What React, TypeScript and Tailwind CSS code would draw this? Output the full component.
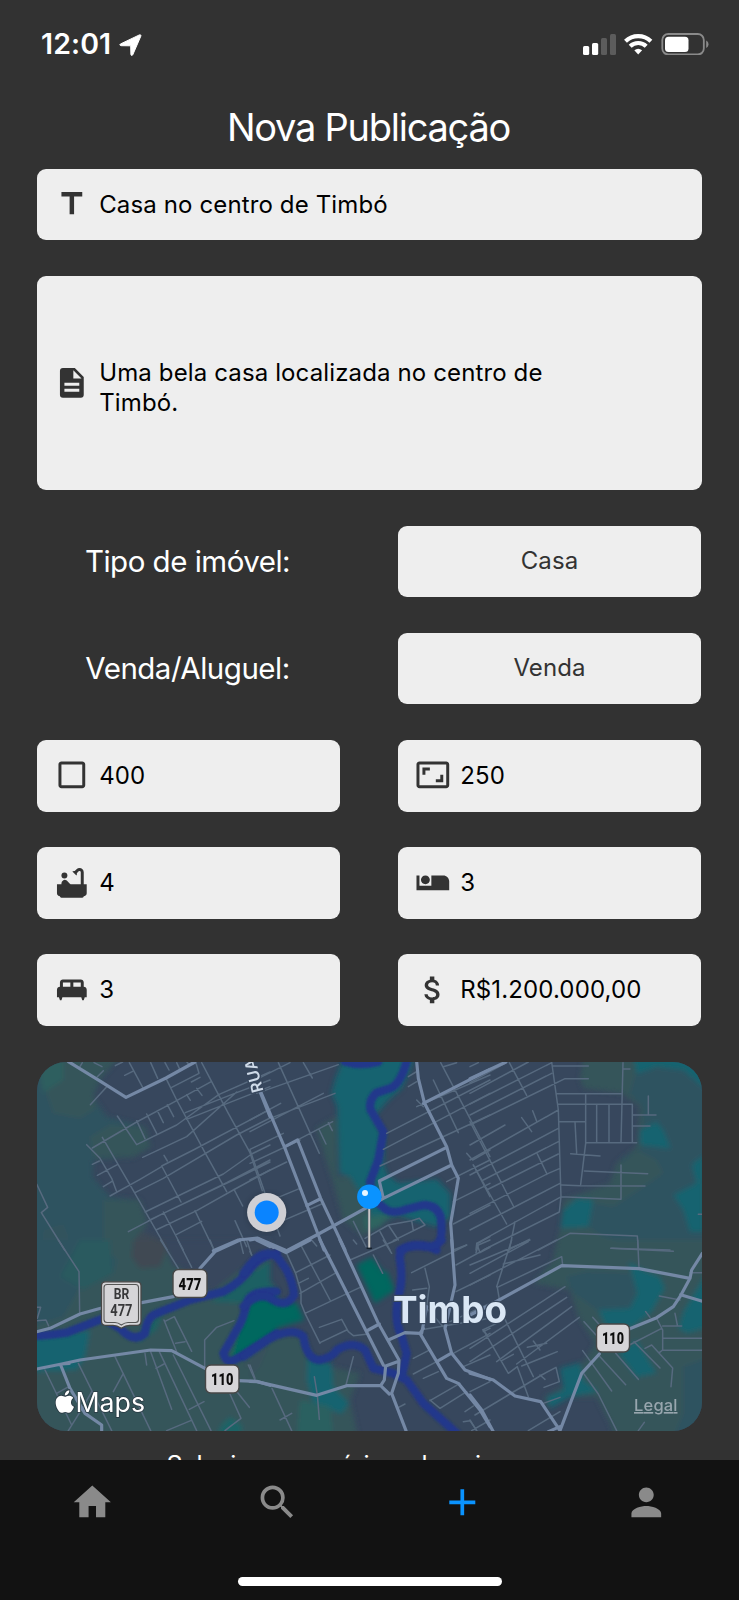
import type { ReactNode } from "react";
import type { IconType } from "react-icons";
import {
  MdAdd,
  MdAirlineSeatIndividualSuite,
  MdAspectRatio,
  MdAttachMoney,
  MdBathtub,
  MdCheckBoxOutlineBlank,
  MdHome,
  MdKingBed,
  MdPerson,
  MdSearch,
  MdTitle,
} from "react-icons/md";

const DocumentIcon = ({ className }: { className?: string }) => (
  <svg viewBox="0 0 24 24" className={className} fill="currentColor" fillRule="evenodd">
    <path d="M14 2H6a2 2 0 0 0-2 2v16a2 2 0 0 0 2 2h12a2 2 0 0 0 2-2V8zM13 3.500 18.500 9H13zM7 12h10v2H7zM7 16h10v2H7z" />
  </svg>
);

function StatusBar() {
  return (
    <div className="flex h-[88px] shrink-0 items-center justify-between pl-[41px] pr-[30px]">
      <div className="flex items-center gap-[8px] pt-[1px]">
        <span className="text-[28.500px] font-semibold leading-none tracking-[0.1px]">12:01</span>
        <svg width="23" height="22" viewBox="0 0 23 22" fill="#fff" stroke="#fff" strokeWidth="1" strokeLinejoin="round">
          <path d="M1.400 10 20.400.9c1-.4 1.800.2 1.400 1.300L13.800 20.700c-.5 1.100-1.900.9-1.900-.3l-.2-8.600-9.600-.1c-1.300-.1-1.600-1.200-.7-1.700z" />
        </svg>
      </div>
      <svg width="127" height="22" viewBox="0 0 127 22">
        <rect x="1" y="13" width="6.200" height="9" rx="1.500" fill="#fff" />
        <rect x="10" y="10" width="6.200" height="12" rx="1.500" fill="#fff" />
        <rect x="19" y="5" width="6" height="17" rx="1.500" fill="#5c5c5c" />
        <rect x="28" y="1" width="6" height="21" rx="1.500" fill="#5c5c5c" />
        <g fill="none" stroke="#fff" strokeWidth="4.200">
          <path d="M43.500 8.200a18.500 18.500 0 0 1 25.400 0" />
          <path d="M48.200 13.200a11.600 11.600 0 0 1 16 0" />
        </g>
        <path d="M52.300 17.300a6 6 0 0 1 7.800 0l-3.900 4.200z" fill="#fff" />
        <rect x="80.300" y="1" width="41.500" height="20.500" rx="6" fill="none" stroke="#8a8a8a" strokeWidth="1.800" />
        <rect x="83" y="3.700" width="23.500" height="15.200" rx="3.500" fill="#fff" />
        <path d="M124.200 7.500c3 1.500 3 6 0 7.500z" fill="#8a8a8a" />
      </svg>
    </div>
  );
}

type AnyIcon = IconType | typeof DocumentIcon;

function Field({ icon: Icon, children, tall }: { icon: AnyIcon; children: ReactNode; tall?: boolean }) {
  return (
    <div
      className={
        "flex items-center gap-[9.500px] rounded-[9px] bg-[#eee] pl-[17px] text-[24px] leading-[30px] text-black " +
        (tall ? "h-[214.200px]" : "h-[71.400px]")
      }
    >
      <Icon className="mb-[1px] size-[35.700px] shrink-0 text-[#333]" />
      <span className={tall ? "w-[470px] pt-[9px] tracking-[0.130px]" : "pt-[1px] tracking-[0.130px]"}>{children}</span>
    </div>
  );
}

function SelectRow({ label, value }: { label: string; value: string }) {
  return (
    <div className="grid grid-cols-[303px_303px] items-center justify-between">
      <span className="pb-[1px] pr-[2px] text-center text-[29.500px] tracking-[-0.5px]">{label}</span>
      <div className="flex h-[71.400px] items-center justify-center rounded-[9px] bg-[#eee] pb-[1px] text-[24px] tracking-[0.100px] text-[#333]">
        {value}
      </div>
    </div>
  );
}

/* Map geometry: every tile covers 240x200 px and is drawn at a third of its own units. */
type Shape = [fill: string, d: string];
interface Tile {
  x: number;
  y: number;
  land: Shape[];
  river: string;
  minor: string;
  major: string;
}

const GREEN = "#35555a";
const SEA = "#2d5260";
const TEAL = "#12646f";
const FOREST = "#03685f";
const CITY = "#37475d";

const tiles: Tile[] = [
  {
    x: 30,
    y: 1050,
    land: [
      [SEA, "M0 0H280L210 90 190 140 230 200 345 230 362 290 310 322 190 330 188 380 240 440 330 450 350 520 310 560V620H0Z"],
      [GREEN, "M60 0H290L215 80 190 130 200 175 150 205 70 190 50 130Z"],
      ["#2d5f5f", "M20 30H100V90L40 130Z"],
      [GREEN, "M180 260 240 225 345 230 362 290 310 322 190 325Z"],
      [GREEN, "M220 450 330 450 352 520 310 600H220Z"],
      ["#31535d", "M40 540 100 520 120 570 90 610H30Z"],
      ["#3e4956", "M330 545 380 560 400 620H290Z"],
    ],
    river: "",
    minor:
      "M150 50 157 38M192 38 216 50M181 164 229 112M202 80 220 62M256 47 278 36M284 76 308 64M298 38 338 112M362 38 383 85M405 38 417 60M440 38 448 55M470 35 478 45M425 112 507 70 498 40M484 96 510 82M515 38 595 190 660 308 697 422M408 85 440 150 525 308 590 425M187 294 320 216 440 152 545 94M262 198 320 284 440 225 566 134 720 66M320 212 345 266M350 192 380 250M382 182 400 218M412 164 431 200M470 134 481 151M500 115 516 136M338 322 470 260 620 126M466 188 620 128 720 90M470 208 720 110M395 348 490 300 720 178M315 428 400 385 620 255 720 204M240 438 330 388 395 350M170 284 210 325 245 385 260 425M217 262 310 422 412 600M187 343 208 333M202 376 262 344M220 410 246 394M402 316 412 333M395 348 453 456M345 486 580 372 665 312 720 285M355 512 590 398 720 330M295 545 400 490 610 390 720 336M400 486 460 600M495 482 552 600M378 540 500 482 610 420 720 360M440 553 515 514M612 418 638 468M615 512 650 590M20 402 53 472 34 488 104 600",
    major: "M115 35 208 92 288 142 408 84 495 36M690 125 720 200M550 602 625 570 682 564 730 592",
  },
  {
    x: 250,
    y: 1050,
    land: [
      [GREEN, "M200 235 260 200V380L300 380 380 520 340 560 280 510 250 400 225 320Z"],
      [TEAL, "M290 0H500L480 60 455 115 415 150 372 200 402 260 400 340 412 375 445 400 560 388 600 430 600 500 560 530 440 495 370 530 355 470 300 380 268 370 262 170 245 130 255 90Z"],
      ["#2d6560", "M340 500 430 490 390 530 350 545Z"],
    ],
    river:
      "M285 35Q330 50 385 35M470 35Q450 105 420 115L380 128Q355 150 362 180L400 245 385 330 360 395 372 450 410 480Q430 492 470 478L520 465Q560 465 572 500 580 560 565 580M450 600Q500 570 560 600",
    minor:
      "M0 98 120 38M20 130 265 44M0 210 92 160M60 205 255 130M0 245 220 130M0 298 100 250M0 340 150 270M100 292 248 215M0 390 110 336M85 38 208 310M160 38 187 84M208 240 228 282M235 218 247 242M0 300 45 430M90 440 150 415M80 520 215 462M90 558 80 530M310 514 348 590M390 545 420 600M345 565 415 525 485 512 508 505 525 525 430 572M415 525 445 570M485 512 490 542M500 170 720 75M475 110 500 95M475 80 498 66M500 150 520 170M550 90 625 248M572 38 720 320M580 50 620 38M410 250 720 90M400 298 720 130M390 348 720 195M590 395 720 330M650 310 668 330 720 300M670 345 720 440M610 455 720 400M610 522 720 465M678 600 680 582 720 560M610 600 650 585",
    major:
      "M30 120 105 295 205 555 222 600M105 290 143 270 212 445 285 600M170 467 210 447M110 602 200 555 310 495 400 445 605 345M400 445 388 393 590 292M500 35 505 85 523 158 590 290 605 345 625 385 602 520 608 600M520 160 720 58M0 570 25 565 105 600",
  },
  {
    x: 470,
    y: 1050,
    land: [
      [GREEN, "M345 0H720V620H250L270 540 280 450 420 400 440 340 500 290 510 170 455 130 340 115 330 85Z"],
      [SEA, "M500 60 720 40V600H560L400 560 355 530 370 460 430 470 520 410 580 370 560 330 500 300 450 340 460 320 520 290 520 170 480 130Z"],
      [TEAL, "M490 20H720V130L640 60 560 50 500 72Z"],
      [TEAL, "M510 240 560 215 580 240 602 296 510 285Z"],
      [TEAL, "M665 345 700 315V545L660 545 640 480 610 435 680 400Z"],
      [TEAL, "M280 480 320 445 370 450 355 530 272 535Z"],
    ],
    river: "",
    minor:
      "M0 50 25 38M0 130 175 36M0 98 105 40M0 162 245 38M0 195 245 70M0 225 285 86 355 86M0 330 265 180M0 285 105 225M0 375 265 235M40 390 265 275M50 420 265 312M0 490 235 370 270 355M0 540 270 400M20 580 270 442M40 600 268 486M0 215 130 468M10 345 110 522M118 38 170 136M155 203 185 245M188 182 200 214M202 312 230 370M118 600 135 515M115 600 178 568M245 36 265 180 273 440 268 486M248 48 355 48M262 131 453 131M265 163 487 163V276M459 38 453 276M460 57H480M347 131V280L332 403M350 278H500M270 215H347M380 165V276M417 165V276M487 195H558M535 138V195M487 228H540M315 215 320 310M302 311 390 318M343 363 533 371M453 345V448L273 440M275 405 332 407 525 408M205 600 300 550 502 558 505 600M425 595 600 600M685 493H697",
    major: "M0 86 108 36",
  },
  {
    x: 30,
    y: 1240,
    land: [
      [GREEN, "M0 0H400L430 70 490 110 540 160 720 20V640H0Z"],
      [SEA, "M0 0H200L260 60 250 100 150 140 100 230 0 260Z"],
      ["#2c5a5e", "M150 0H240L250 100 160 150 90 110Z"],
      ["#3f4852", "M310 0H420L390 80 330 85 305 50Z"],
      [CITY, "M400 0H720V30L640 80 540 160 500 80H430Z"],
      [TEAL, "M0 290 180 270 165 350 140 390 0 395Z"],
      ["#1b6163", "M340 265 400 210 380 270 320 310Z"],
      ["#1b6163", "M570 165 720 60V155L650 190 540 185Z"],
      [FOREST, "M600 360 625 260 660 180 740 150V280L640 350Z"],
      ["#404a58", "M640 380 740 320V370Z"],
      ["#1e6366", "M570 560 600 530 640 560 620 600H560Z"],
    ],
    river:
      "M10 288Q70 285 110 278L220 235 270 265Q310 310 345 280 350 230 380 220L480 180 580 155Q630 130 670 75 700 45 740 40M740 155Q660 150 650 190 640 240 620 270L580 340Q590 380 630 350L740 280",
    minor:
      "M85 0 147 95 149 218M20 202 32 202 22 235M20 242 48 240 56 258M45 390 125 555M80 460 112 442M145 370 245 572M185 455 160 500 115 572M255 350 362 572M280 400 250 455M345 340 350 375M362 335 425 508M388 335 500 572M430 345 543 572M378 385 402 372M402 240 440 335M405 244 433 230 485 334M437 310 465 305M524 380V300L560 262 612 242M478 508 522 485M410 572 482 542M600 462 633 535 600 560 585 572M610 442 658 502M655 375 675 420M392 0 445 85M443 0 485 82M540 0 550 25M630 0 640 40M650 0 665 45",
    major:
      "M20 275 60 265 150 222 212 205M335 188 430 170M510 85 555 35 630 0M680 0 720 20M20 387 95 372 150 360 362 330 425 332 525 385M625 422 680 424 720 436M92 375 120 445 165 520 215 555V572M95 372 118 370",
  },
  {
    x: 250,
    y: 1240,
    land: [
      [GREEN, "M0 330 100 280 160 290 190 370 330 400 300 480 330 620H0Z"],
      ["#37515b", "M0 350 60 310 30 380 0 420Z"],
      ["#1b6163", "M0 80 50 110 80 150 0 175Z"],
      [FOREST, "M0 200 60 180 140 190 162 240 60 270 0 325Z"],
      [TEAL, "M172 350 245 370 250 440 297 490 275 522 190 490 170 420Z"],
      ["#2c6160", "M150 480 240 500 250 600H140Z"],
      [FOREST, "M320 75 365 52 400 95H412L434 150 375 190Z"],
    ],
    river:
      "M-20 100Q40 10 85 55L110 90Q130 130 132 165 110 205 70 180 30 150-20 200M-20 350 60 295Q130 260 160 290 170 360 210 360 250 350 260 330 310 300 345 330L370 385 430 400 470 420 520 490 620 580M575 0Q560 20 530 20 440 10 450 60 460 120 445 170 430 240 455 290L470 340 455 410",
    minor:
      "M0 35 5 45M110 40 137 100 153 155V190L165 220 210 310M137 98 240 45M145 130 175 115M150 160 255 100M165 220 335 140M155 20 240 180M185 0 200 18M208 262 275 238 295 275 310 287 355 282M210 308 290 270M300 60 440 0M310 0 320 12M370 45 398 100M400 0 425 40M485 98 650 15M525 85 538 140 530 200M488 150 530 145M523 268 720 235M618 75 720 20M618 155 720 105M680 10 690 38 720 22M600 245 720 190M700 275 720 265M610 340 720 280M490 355 535 332M490 402 560 365M520 415 565 395M540 480 570 505 650 455M540 482 630 430M640 380 720 345M645 515 670 498M640 545 660 542 680 572M665 572 720 540M715 290 700 270M66 445 125 572M90 540 125 520M193 410 202 465 208 538M288 435 310 350M440 505 465 492M0 375 15 415M530 205 580 260",
    major:
      "M30 0 108 38 180 0M210 0 260 98 400 375M270 0 385 250 447 360 445 400 425 460 468 572M355 270 388 252M407 378 440 366M407 378 403 420 392 437 290 437 200 466 20 425 0 424M392 437 418 462M415 300 465 278 510 280 590 415 625 430 690 510 720 560M515 280 530 200M510 280 520 265M605 0 615 135 585 265 605 340 645 390 720 418M560 365 603 340",
  },
  {
    x: 470,
    y: 1240,
    land: [
      [GREEN, "M270 0H720V640H450L420 550 380 470 290 470 230 500 225 470 280 440 290 380 340 370 375 310 325 230 300 150 190 130 250 60Z"],
      [SEA, "M290 110 350 95 480 100 500 150 480 210 390 215 310 160Z"],
      [SEA, "M640 380 720 350V620H600L640 520Z"],
      [TEAL, "M475 65 520 90 570 110 585 145 545 215 490 260 410 265 385 210 480 205 502 160Z"],
      [TEAL, "M640 215 720 80V260L650 280 625 265Z"],
      [TEAL, "M445 340 500 300 560 400 500 412Z"],
      [TEAL, "M270 385 330 368 340 420 385 455 300 470 240 505 230 470 282 450Z"],
    ],
    river: "",
    minor:
      "M0 75 180 0M18 38 25 15 60 0M0 135 260 0M0 100 175 5M80 140 125 0M88 178 82 142 275 50 278 75M100 72 210 45M503 0 507 85M422 25 610 34M0 325 285 140M0 365 290 172M80 365 305 200M140 372 328 232M105 238 190 410M40 270 115 400M38 270 80 250M95 362 130 343M115 400 142 380 175 470M172 322 230 310M190 303 210 330M0 455 60 425M15 525 215 405 258 382 268 425 222 442M130 455 160 440M155 378 262 335M210 405 225 418M0 540 20 572M175 572 270 515M220 490 270 472M338 332 425 453M390 350 467 434M437 340 505 418M342 245 378 285M368 232 395 262M478 315 575 265M492 305 570 384M525 325 545 315 608 384 603 440M527 215 540 232M560 235 578 270V330L568 338M578 295H697M578 331H697M578 258H635M615 220 622 255M568 168 630 180M660 98H697M342 402 385 462 440 572M505 572 523 547",
    major:
      "M0 225 60 195 275 77 507 86 660 115 630 170 610 200 560 233 470 270M660 115 665 90 697 40M632 164 697 184M388 342 335 400 270 572 212 485 135 468 70 420 0 400M0 465 35 510 70 575M235 575 270 560",
  },
];

function Layer({ kind, color, width }: { kind: "river" | "minor" | "major"; color: string; width: number }) {
  return (
    <g fill="none" stroke={color} strokeWidth={width} strokeLinejoin="round" strokeLinecap="round">
      {tiles.map((t) => (
        <path key={`${t.x}-${t.y}`} transform={`translate(${t.x} ${t.y}) scale(.33333)`} d={t[kind]} />
      ))}
    </g>
  );
}

function Shield({ x, y, w, label }: { x: number; y: number; w: number; label: string }) {
  return (
    <g>
      <rect x={x} y={y} width={w} height="28" rx="5.500" fill="#d6d5d8" stroke="#474747" strokeWidth="1.400" />
      <text
        x={x + 5.6}
        y={y + 20}
        textLength={w - 11.2}
        lengthAdjust="spacingAndGlyphs"
        className="font-['Roboto',sans-serif] text-[17px] font-black"
        fill="#0c0c0c"
      >
        {label}
      </text>
    </g>
  );
}

function CityMap() {
  return (
    <svg viewBox="37 1062 665 369" className="mt-[0.500px] block h-[369px] w-[665px] rounded-[29px]">
      <defs>
        <filter id="soft" x="-5%" y="-5%" width="110%" height="110%">
          <feGaussianBlur stdDeviation="2.500" />
        </filter>
        <filter id="bank" x="-5%" y="-5%" width="110%" height="110%">
          <feGaussianBlur stdDeviation="1" />
        </filter>
      </defs>
      <rect x="37" y="1062" width="665" height="369" fill={CITY} />
      <g filter="url(#soft)">
        {tiles.map((t) => (
          <g key={`${t.x}-${t.y}`} transform={`translate(${t.x} ${t.y}) scale(.33333)`}>
            {t.land.map(([fill, d]) => (
              <path key={d} fill={fill} d={d} />
            ))}
          </g>
        ))}
      </g>
      <g filter="url(#bank)">
        <Layer kind="river" color="#24378b" width={25} />
      </g>
      <Layer kind="minor" color="#576a7f" width={4.5} />
      <Layer kind="major" color="#7488a5" width={9.5} />

      <text
        transform="translate(263.500 1091) rotate(-104)"
        className="font-['Inter',sans-serif] text-[16px] font-semibold tracking-[0.5px]"
        fill="#cfdbe9"
        stroke="#37475d"
        strokeWidth="3"
        paintOrder="stroke"
      >
        RUA
      </text>
      <text
        x="393"
        y="1322.500"
        textLength="114"
        lengthAdjust="spacingAndGlyphs"
        className="font-['Inter',sans-serif] text-[37.500px] font-bold"
        fill="#dae7f5"
        stroke="#37475d"
        strokeWidth="2.500"
        paintOrder="stroke"
      >
        Timbo
      </text>

      <Shield x={173} y={1269.5} w={34} label="477" />
      <Shield x={205.5} y={1365} w={33.5} label="110" />
      <Shield x={596.5} y={1324} w={33} label="110" />
      <path
        d="M105.500 1281.800H137q4 0 4 4v35.500q0 4-4 4h-7.500q-4 0-8.200 3-4.300-3-8.300-3h-7.500q-4 0-4-4v-35.500q0-4 4-4z"
        fill="#d6d5d8"
        stroke="#474747"
        strokeWidth="1.300"
      />
      <path
        d="M107 1284.500h28.500q3 0 3 3v32q0 3-3 3h-7.500q-3 0-6.700 2.500-3.300-2.500-6.300-2.500h-8q-3 0-3-3v-32q0-3 3-3z"
        fill="none"
        stroke="#555"
        strokeWidth="1.100"
      />
      <g className="font-['Roboto',sans-serif] font-bold" fill="#38383a">
        <text x="113.800" y="1299.300" textLength="15.500" lengthAdjust="spacingAndGlyphs" className="text-[14.500px]">
          BR
        </text>
        <text x="110.300" y="1316.300" textLength="22.200" lengthAdjust="spacingAndGlyphs" className="text-[17px]">
          477
        </text>
      </g>

      <circle cx="266.700" cy="1212.700" r="21" fill="#000" opacity=".12" filter="url(#soft)" />
      <circle cx="266.700" cy="1212.500" r="19.600" fill="#cfcfd4" />
      <circle cx="266.700" cy="1212.500" r="12" fill="#0a84ff" />

      <ellipse cx="369.300" cy="1248.300" rx="3" ry="1" fill="#15202c" />
      <path d="M369.200 1206v41.500" stroke="#56606b" strokeWidth="3" />
      <path d="M369.200 1206v41.500" stroke="#c9c9c9" strokeWidth="1.800" />
      <circle cx="369.300" cy="1196.700" r="12.200" fill="#0a93ff" />
      <circle cx="365" cy="1193" r="3" fill="#e9f6ff" />

      <g fill="#fff" stroke="#2a3a44" strokeWidth="1.600" paintOrder="stroke">
        <path
          transform="translate(51.300 1388) scale(1.130)"
          d="M18.710 19.500C17.880 20.740 17 21.950 15.660 21.970C14.320 22 13.890 21.180 12.370 21.180C10.840 21.180 10.370 21.950 9.100 22C7.790 22.050 6.800 20.680 5.960 19.470C4.250 17 2.940 12.450 4.700 9.390C5.570 7.870 7.130 6.910 8.820 6.880C10.100 6.860 11.320 7.750 12.110 7.750C12.890 7.750 14.370 6.680 15.920 6.840C16.570 6.870 18.390 7.100 19.560 8.820C19.470 8.880 17.390 10.100 17.410 12.630C17.440 15.650 20.060 16.660 20.090 16.670C20.060 16.740 19.670 18.110 18.710 19.500M13 3.500C13.730 2.670 14.940 2.040 15.940 2C16.070 3.170 15.600 4.350 14.900 5.190C14.210 6.040 13.070 6.700 11.950 6.610C11.800 5.460 12.360 4.260 13 3.500Z"
        />
        <text
          x="75.500"
          y="1411.500"
          textLength="69.500"
          lengthAdjust="spacingAndGlyphs"
          className="font-['Inter',sans-serif] text-[26.500px] font-normal"
        >
          Maps
        </text>
      </g>
      <text
        x="634"
        y="1411"
        textLength="43.500"
        className="font-['Inter',sans-serif] text-[16.500px] font-medium underline underline-offset-[2px]"
        fill="#98a6ae"
      >
        Legal
      </text>
    </svg>
  );
}

const tabs: { icon: IconType; active?: boolean }[] = [
  { icon: MdHome },
  { icon: MdSearch },
  { icon: MdAdd, active: true },
  { icon: MdPerson },
];

export default function App() {
  return (
    <div className="flex h-[1600px] w-[739px] flex-col overflow-hidden bg-[#323232] font-['Inter','Liberation_Sans',sans-serif] text-white">
      <StatusBar />
      <main className="flex min-h-0 flex-1 flex-col overflow-hidden px-[37px]">
        <h1 className="flex h-[81px] shrink-0 items-center justify-center pb-[4px] pr-[2px] text-[38px] font-normal leading-none tracking-[-1.250px]">
          Nova Publicação
        </h1>
        <div className="flex shrink-0 flex-col gap-[35.700px]">
          <Field icon={MdTitle}>Casa no centro de Timbó</Field>
          <Field icon={DocumentIcon} tall>
            Uma bela casa localizada no centro de Timbó.
          </Field>
          <div className="flex flex-col gap-[35.700px] pr-[1px]">
            <SelectRow label="Tipo de imóvel:" value="Casa" />
            <SelectRow label="Venda/Aluguel:" value="Venda" />
            <div className="grid grid-cols-[303px_303px] justify-between gap-y-[35.700px]">
              <Field icon={MdCheckBoxOutlineBlank}>400</Field>
              <Field icon={MdAspectRatio}>250</Field>
              <Field icon={MdBathtub}>4</Field>
              <Field icon={MdAirlineSeatIndividualSuite}>3</Field>
              <Field icon={MdKingBed}>3</Field>
              <Field icon={MdAttachMoney}>R$1.200.000,00</Field>
            </div>
          </div>
          <CityMap />
        </div>
        <p className="mt-[16.500px] shrink-0 whitespace-nowrap text-center text-[25px] leading-[36px] tracking-[-0.330px]">
          Selecione no mínimo duas imagens
        </p>
      </main>
      <nav className="flex h-[140.500px] shrink-0 flex-col items-center justify-between bg-[#121212] pb-[14px] pt-[20px]">
        <div className="grid w-full grid-cols-4 justify-items-center">
          {tabs.map(({ icon: Icon, active }, i) => (
            <Icon key={i} className={active ? "size-[44.600px] text-[#0a93ff]" : "size-[44.600px] text-[#8a8a8a]"} />
          ))}
        </div>
        <div className="h-[9px] w-[264px] rounded-full bg-white" />
      </nav>
    </div>
  );
}
